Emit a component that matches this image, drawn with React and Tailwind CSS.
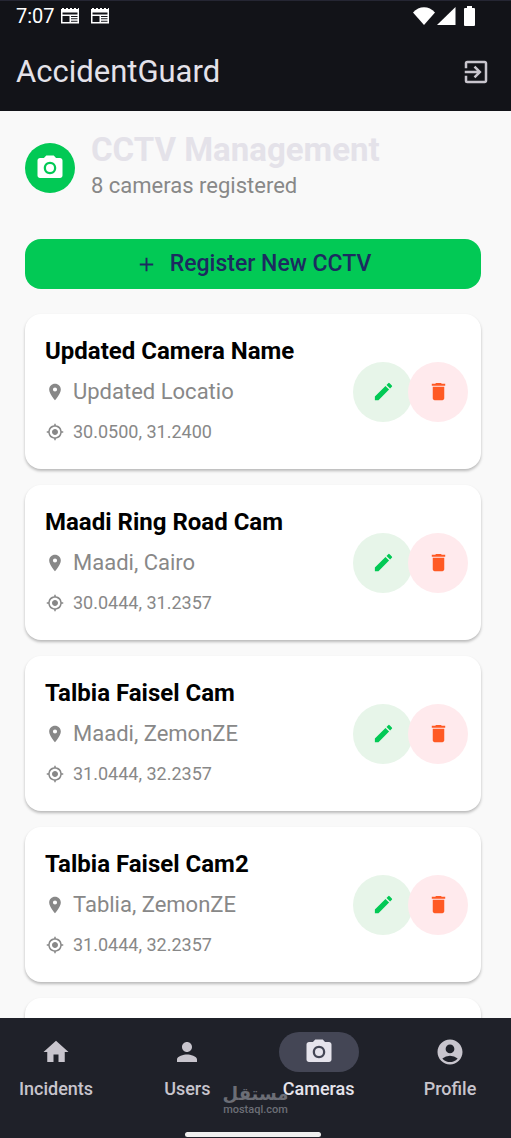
import React from "react";
import {
  MdLocationOn,
  MdMyLocation,
  MdEdit,
  MdDelete,
  MdHome,
  MdPerson,
  MdAccountCircle,
  MdAdd,
  MdExitToApp,
} from "react-icons/md";

const cameras = [
  { name: "Updated Camera Name", place: "Updated Locatio", coords: "30.0500, 31.2400" },
  { name: "Maadi Ring Road Cam", place: "Maadi, Cairo", coords: "30.0444, 31.2357" },
  { name: "Talbia Faisel Cam", place: "Maadi, ZemonZE", coords: "31.0444, 32.2357" },
  { name: "Talbia Faisel Cam2", place: "Tablia, ZemonZE", coords: "31.0444, 32.2357" },
];

const tabs = [
  { label: "Incidents", Icon: MdHome },
  { label: "Users", Icon: MdPerson },
  { label: "Cameras", Icon: CameraIcon, active: true },
  { label: "Profile", Icon: MdAccountCircle },
];

function CameraIcon({ className }) {
  return (
    <svg viewBox="0 0 24 24" fill="currentColor" className={className} aria-hidden="true">
      <circle cx="12" cy="12" r="3.2" />
      <path d="M9 2 7.170 4H4c-1.100 0-2 .9-2 2v12c0 1.100.9 2 2 2h16c1.100 0 2-.9 2-2V6c0-1.100-.9-2-2-2h-3.170L15 2H9zm3 15c-2.760 0-5-2.240-5-5s2.240-5 5-5 5 2.240 5 5-2.240 5-5 5z" />
    </svg>
  );
}

function NewsIcon() {
  return (
    <svg viewBox="0 0 18 16" className="h-4 w-[18px]" aria-hidden="true">
      <path
        fill="#fff"
        fillRule="evenodd"
        d="M0 1h1V0h2v1h2V0h2v1h2V0h2v1h2V0h2v1h2V0h1v15.500H0zM1.500 4.500v2h15v-2zM1.500 8v6h7V8zM10 8v1h6.500V8zM10 10.300v1h6.500v-1zM10 12.700v1h6.500v-1z"
      />
    </svg>
  );
}

function StatusBar() {
  return (
    <div className="flex h-8 items-center justify-between border-t border-[#252633] pb-px pl-4 pr-9 text-white">
      <div className="flex items-center">
        <span className="mr-[6px] text-[20px] leading-7">7:07</span>
        <NewsIcon />
        <span className="w-3" />
        <NewsIcon />
      </div>
      <div className="flex items-center">
        <svg viewBox="0 0 22 18" className="h-[18px] w-[22px]" fill="#fff" aria-hidden="true">
          <path d="M11 18 0 5.500C3 2 7 .3 11 .3S19 2 22 5.500z" />
        </svg>
        <svg viewBox="0 0 19 18" className="ml-[2px] h-[18px] w-[19px]" fill="#fff" aria-hidden="true">
          <path d="M18.500 0v18H0z" />
        </svg>
        <svg viewBox="0 0 11 20" className="ml-2 h-5 w-[11px]" fill="#fff" aria-hidden="true">
          <path d="M3 0h5v2h2a1 1 0 0 1 1 1v16a1 1 0 0 1-1 1H1a1 1 0 0 1-1-1V3a1 1 0 0 1 1-1h2z" />
        </svg>
      </div>
    </div>
  );
}

function CameraCard({ name, place, coords }) {
  return (
    <li className="flex items-center rounded-2xl bg-white py-[21px] pl-5 pr-[13px] shadow-[0_2px_3px_rgba(0,0,0,0.26)]">
      <div className="min-w-0 flex-1">
        <h2 className="text-[24px] font-bold leading-8 text-black">{name}</h2>
        <p className="mt-[9px] flex items-center gap-2 text-[22px] leading-8 text-[#888888]">
          <MdLocationOn className="size-5 shrink-0" />
          {place}
        </p>
        <p className="mt-2 flex items-center gap-2 text-[18px] leading-8 text-[#888888]">
          <MdMyLocation className="size-5 shrink-0 p-px" />
          {coords}
        </p>
      </div>
      <div className="flex shrink-0">
        <button
          type="button"
          aria-label={`Edit ${name}`}
          className="flex size-[60px] items-center justify-center rounded-full bg-[#e7f5e9] text-[#02c955]"
        >
          <MdEdit className="size-[23px]" />
        </button>
        <button
          type="button"
          aria-label={`Delete ${name}`}
          className="-ml-[5px] flex size-[60px] items-center justify-center rounded-full bg-[#ffeaed] text-[#ff5a24]"
        >
          <MdDelete className="size-[23px]" />
        </button>
      </div>
    </li>
  );
}

export default function App() {
  return (
    <div className="flex h-screen flex-col overflow-hidden bg-[#f9f9f9] font-[Roboto,sans-serif]">
      <header className="shrink-0 bg-[#121318]">
        <StatusBar />
        <div className="flex items-center justify-between pl-4 pr-5">
          <h1 className="text-[31px] leading-[79px] text-[#e4e2e9]">AccidentGuard</h1>
          <button type="button" aria-label="Log out" className="text-[#c8c5cd]">
            <MdExitToApp className="size-[30px]" />
          </button>
        </div>
      </header>

      <main className="min-h-0 flex-1 overflow-hidden pl-[25px] pr-[30px] pt-[21px]">
        <div className="flex items-center gap-4">
          <div className="flex size-[50px] shrink-0 items-center justify-center rounded-full bg-[#02c955] text-white">
            <CameraIcon className="size-[30px]" />
          </div>
          <div>
            <h2 className="text-[33px] font-bold leading-9 text-[#e4e2e9]">CCTV Management</h2>
            <p className="text-[22px] leading-9 text-[#888888]">8 cameras registered</p>
          </div>
        </div>

        <button
          type="button"
          className="mt-[35px] flex h-[50px] w-full items-center justify-center gap-3 rounded-2xl bg-[#02c955] text-[23px] font-medium text-[#1c2b60]"
        >
          <MdAdd className="size-[23px]" />
          Register New CCTV
        </button>

        <ul className="mt-[25px] flex flex-col gap-4">
          {cameras.map((camera) => (
            <CameraCard key={camera.name} {...camera} />
          ))}
          <li className="h-40 shrink-0 rounded-2xl bg-white shadow-[0_2px_3px_rgba(0,0,0,0.26)]" />
        </ul>
      </main>

      <nav className="relative flex h-[120px] shrink-0 justify-between bg-[#1f2129] pr-[5px] pt-[14px]">
        {tabs.map(({ label, Icon, active }) => (
          <a
            key={label}
            href={`#${label.toLowerCase()}`}
            aria-current={active ? "page" : undefined}
            className={
              active
                ? "flex w-28 flex-col items-center text-[#e6e4ec]"
                : "flex w-28 flex-col items-center text-[#c8c5cd]"
            }
          >
            <span
              className={
                active
                  ? "flex h-10 w-20 items-center justify-center rounded-full bg-[#444655]"
                  : "flex h-10 w-20 items-center justify-center"
              }
            >
              <Icon className="size-[30px]" />
            </span>
            <span className="mt-1 text-[18px] font-medium leading-[26px]">{label}</span>
          </a>
        ))}
        <div className="absolute inset-x-0 bottom-[22px] flex flex-col items-center text-[#6c6e76]">
          <span lang="ar" className="font-['DejaVu_Sans',sans-serif] text-[18px] font-bold leading-5">
            مستقل
          </span>
          <span className="text-[11px] font-medium leading-3">mostaql.com</span>
        </div>
        <div className="absolute bottom-px left-0 right-[5px] mx-auto h-[5px] w-[136px] rounded-full bg-[#eeeeee]" />
      </nav>
    </div>
  );
}
